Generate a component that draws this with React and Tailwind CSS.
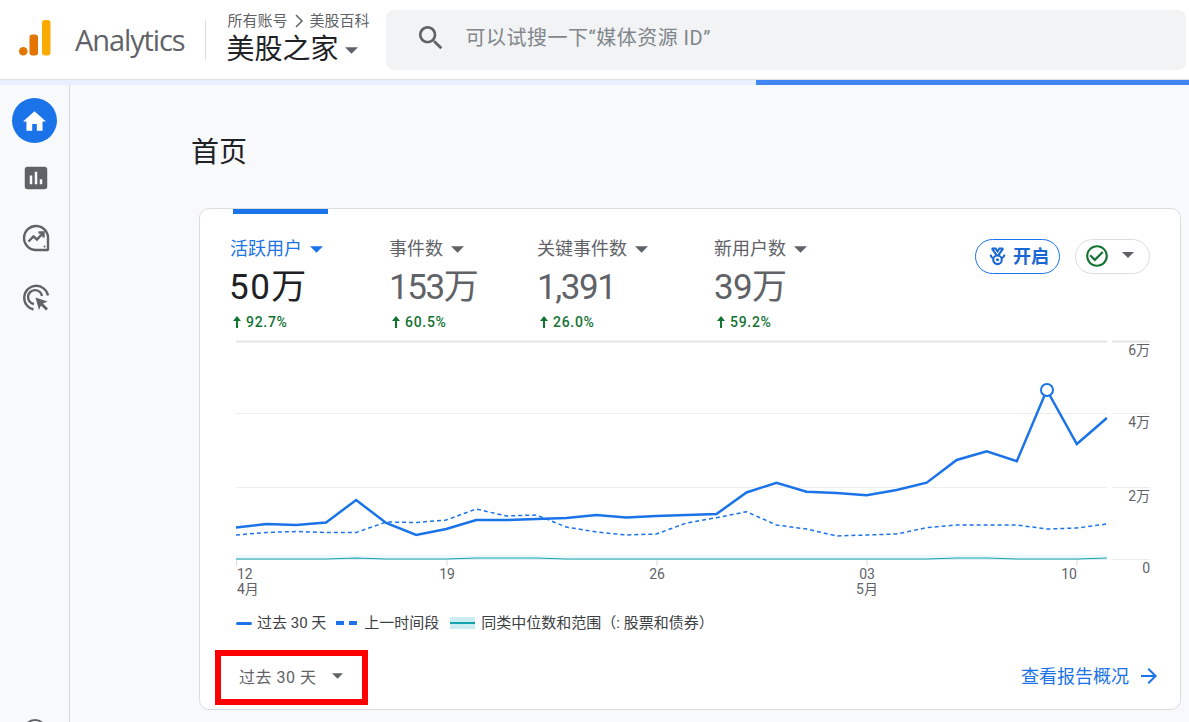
const cjk = "font-['Roboto','Noto_Sans_CJK_SC',sans-serif]";

const current = [527.5, 524, 525, 522.5, 500, 523, 535, 529, 520, 520, 519, 518, 515, 517.5, 516, 515, 514, 492.5, 482.7, 491.7, 493, 495.3, 490, 482.7, 460, 451.3, 461.3, 390, 444, 418];
const previous = [535, 532.5, 531.5, 532.5, 532.5, 522, 522.5, 520, 509, 516, 515, 527, 532, 535, 534, 523, 517.7, 511.7, 525, 529, 536, 535, 534, 527.7, 525, 525, 525, 529, 528, 524];
const median = [559, 559, 559, 559, 558, 559, 559, 559, 558, 558, 558, 559, 559, 559, 559, 559, 559, 559, 559, 559, 559, 559, 559, 559, 558, 558, 559, 559, 559, 558];

const toPoints = (values) => values.map((y, i) => `${236 + i * 30.03},${y}`).join(" ");

function Caret({ className }) {
  return (
    <svg viewBox="0 0 12 6" className={className} fill="currentColor">
      <path d="M0 0h12L6 6z" />
    </svg>
  );
}

function Metric({ label, value, change, active, width, valueClass }) {
  return (
    <div className={width}>
      <div className={`flex items-center gap-[8px] text-[18px] leading-[24px] ${active ? "text-[#1a73e8]" : "text-[#5f6368]"}`}>
        <span>{label}</span>
        <Caret className="w-[13px] h-[7px]" />
      </div>
      <div className={`mt-[7px] text-[35px] leading-[40px] ${valueClass} ${active ? "text-[#202124]" : "text-[#5f6368]"}`}>{value}</div>
      <div className="ml-[1px] mt-[4px] flex items-center gap-[3px] text-[14px] leading-[20px] font-medium text-[#137333] tracking-[0.7px]">
        <svg viewBox="0 0 12 14" className="w-[12px] h-[14px]" fill="currentColor">
          <path d="M6 1 10 6H7v7H5V6H2z" />
        </svg>
        <span>{change}</span>
      </div>
    </div>
  );
}

function Chart() {
  const labelClass = "fill-[#5f6368] text-[14px]";
  return (
    <svg viewBox="230 335 940 265" className="block w-[940px] h-[265px]">
      {[341.5, 413.5, 487.5, 559.5].map((y) => (
        <g key={y} stroke={y === 341.5 ? "#e3e5e8" : "#ebedef"} strokeWidth={y === 341.5 ? 2 : 1}>
          <line x1="236" x2="1107" y1={y} y2={y} />
          <line x1="1112" x2="1150" y1={y} y2={y} />
        </g>
      ))}
      {[236.5, 447, 657, 867, 1077].map((x) => (
        <line key={x} x1={x} x2={x} y1="559" y2="566" stroke="#dadce0" />
      ))}
      <rect x="236" y="555" width="871" height="5" fill="#d5f0f5" opacity="0.4" />
      <polyline points={toPoints(median)} fill="none" stroke="#12a4af" strokeWidth="1.2" />
      <polyline points={toPoints(previous)} fill="none" stroke="#1a73e8" strokeWidth="1.5" strokeDasharray="4 3" />
      <polyline points={toPoints(current)} fill="none" stroke="#1a73e8" strokeWidth="2.5" />
      <circle cx="1047" cy="390" r="6" fill="#fff" stroke="#1a73e8" strokeWidth="2" />
      <text x="237" y="579" className={labelClass}>12</text>
      <text x="237" y="594" className={labelClass}>4月</text>
      <text x="447" y="579" textAnchor="middle" className={labelClass}>19</text>
      <text x="657" y="579" textAnchor="middle" className={labelClass}>26</text>
      <text x="867" y="579" textAnchor="middle" className={labelClass}>03</text>
      <text x="867" y="594" textAnchor="middle" className={labelClass}>5月</text>
      <text x="1069" y="579" textAnchor="middle" className={labelClass}>10</text>
      <text x="1150" y="355" textAnchor="end" className={labelClass}>6万</text>
      <text x="1150" y="427" textAnchor="end" className={labelClass}>4万</text>
      <text x="1150" y="501" textAnchor="end" className={labelClass}>2万</text>
      <text x="1150" y="573" textAnchor="end" className={labelClass}>0</text>
    </svg>
  );
}

function Sidebar() {
  return (
    <aside className="w-[70px] shrink-0 border-r border-[#d5d7da] flex flex-col items-center pt-[13px] relative">
      <div className="w-[45px] h-[45px] ml-[-1px] rounded-full bg-[#1a73e8] flex items-center justify-center">
        <svg viewBox="2 3 20 17" className="w-[23px] h-[20px] ml-[1px]" fill="#fff">
          <path d="M10 20v-6h4v6h5v-8h3L12 3 2 12h3v8z" />
        </svg>
      </div>
      <svg viewBox="0 0 24 24" className="w-[30px] h-[30px] mt-[20px] ml-[2px]" fill="#5f6368">
        <path d="M19 3H5c-1.1 0-2 .9-2 2v14c0 1.1.9 2 2 2h14c1.1 0 2-.9 2-2V5c0-1.1-.9-2-2-2zM9 17H7v-7h2v7zm4 0h-2V7h2v10zm4 0h-2v-4h2v4z" />
      </svg>
      <svg viewBox="0 0 30 30" className="w-[30px] h-[30px] mt-[30px] ml-[2px]" fill="none" stroke="#5f6368" strokeWidth="2.4">
        <path d="M27 16A12 12 0 1 0 15 27h11.5l.5-.5z" />
        <path d="M7.5 18.5l5-5 3.5 3 5.5-6" />
        <path d="M17.5 9.5h5v5" />
        <circle cx="23.5" cy="23.5" r="1" fill="#5f6368" stroke="none" />
      </svg>
      <svg viewBox="0 0 30 30" className="w-[30px] h-[30px] mt-[30px] ml-[2px]" fill="none" stroke="#5f6368" strokeWidth="2.4">
        <path d="M12.5 26.5A12 12 0 1 1 27 12.5" />
        <path d="M13 21a7 7 0 1 1 8-8" />
        <path d="M14.5 14.5l12 4-4.5 2 5 5-2 2-5-5-2 4.5z" fill="#5f6368" stroke="none" />
      </svg>
      <div className="absolute top-[634px] left-[23px] w-[24px] h-[24px] rounded-full border-[2.5px] border-[#5f6368]" />
    </aside>
  );
}

export default function App() {
  return (
    <div className={`w-[1189px] h-[722px] overflow-hidden bg-[#f8f9fb] flex flex-col ${cjk}`}>
      <header className="h-[80px] shrink-0 bg-white border-b border-[#dfe1e5] flex items-center">
        <svg viewBox="0 0 34 38" className="w-[34px] h-[38px] ml-[18px] mt-[-1px]">
          <rect x="1" y="27" width="8.5" height="8.5" rx="4.25" fill="#e37400" />
          <rect x="11.5" y="14.5" width="8.5" height="21" rx="3" fill="#e37400" />
          <rect x="24" y="0" width="8.5" height="35.5" rx="3" fill="#f9ab00" />
        </svg>
        <span className="ml-[23px] text-[29px] leading-none text-[#5f6368] font-['Open_Sans',sans-serif] tracking-[-1.1px]">Analytics</span>
        <div className="ml-[20px] w-px h-[40px] bg-[#dadce0]" />
        <div className="ml-[21px] w-[160px] mt-[-1px]">
          <div className="ml-[1px] flex items-center text-[15px] leading-[20px] text-[#5f6368]">
            <span>所有账号</span>
            <svg viewBox="0 0 10 14" className="w-[10px] h-[14px] mx-[6px]" fill="none" stroke="#5f6368" strokeWidth="1.5">
              <path d="M2 1l6 6-6 6" />
            </svg>
            <span>美股百科</span>
          </div>
          <div className="mt-[2px] flex items-center gap-[6px] text-[28px] leading-[34px] text-[#202124]">
            <span>美股之家</span>
            <Caret className="w-[13px] h-[7px] text-[#5f6368]" />
          </div>
        </div>
        <div className="ml-[-1px] mr-[3px] flex-1 h-[60px] rounded-[8px] bg-[#f1f3f4] flex items-center">
          <svg viewBox="0 0 24 24" className="w-[32px] h-[32px] ml-[29px] mt-[-4px]" fill="#5f6368">
            <path d="M15.5 14h-.79l-.28-.27C15.41 12.59 16 11.11 16 9.5 16 5.91 13.09 3 9.5 3S3 5.91 3 9.5 5.91 16 9.5 16c1.61 0 3.09-.59 4.23-1.57l.27.28v.79l5 4.99L20.49 19l-4.99-5zm-6 0C7.01 14 5 11.99 5 9.5S7.01 5 9.5 5 14 7.01 14 9.5 11.99 14 9.5 14z" />
          </svg>
          <span className="ml-[19px] mt-[-3px] text-[20px] tracking-[0.5px] text-[#80868b]">可以试搜一下“媒体资源 ID”</span>
        </div>
      </header>
      <div className="h-[5px] shrink-0 bg-[#e8f0fe] flex justify-end">
        <div className="w-[433px] bg-[#4285f4]" />
      </div>

      <div className="flex-1 flex min-h-0">
        <Sidebar />
        <main className="flex-1 min-w-0">
          <h1 className="ml-[121px] mt-[48px] text-[28px] leading-[40px] text-[#202124] font-normal">首页</h1>
          <section className="ml-[129px] mt-[35px] w-[982px] h-[502px] bg-white border border-[#dadce0] rounded-[10px] flex flex-col">
            <div className="ml-[33px] w-[95px] h-[5px] bg-[#1a73e8] shrink-0" />
            <div className="flex items-start pl-[30px] pr-[30px] pt-[23px] h-[121px] shrink-0">
              <Metric width="w-[159px]" label="活跃用户" value="50万" change="92.7%" valueClass="ml-[-1px] tracking-[1.5px]" active />
              <Metric width="w-[148px]" label="事件数" value="153万" change="60.5%" valueClass="tracking-[-1.4px]" />
              <Metric width="w-[177px]" label="关键事件数" value="1,391" change="26.0%" valueClass="tracking-[-1.4px]" />
              <Metric width="w-[150px]" label="新用户数" value="39万" change="59.2%" valueClass="tracking-[-0.7px]" />
              <div className="ml-auto flex items-center gap-[15px] mt-[2px]">
                <div className="w-[85px] h-[35px] rounded-full border border-[#1a73e8] flex items-center pl-[12px] gap-[6px] text-[#1967d2] text-[18px] font-bold">
                  <svg viewBox="0 0 20 20" className="w-[19px] h-[19px]" fill="none" stroke="currentColor" strokeWidth="2.2">
                    <path d="M4 1.5l5 7M16 1.5l-5 7M4 1.5h4l2 3 2-3h4" />
                    <circle cx="10" cy="13.5" r="4.5" />
                    <circle cx="10" cy="13.5" r="1.6" fill="currentColor" stroke="none" />
                    <path d="M5.5 11.5A3 3 0 0 1 3 8M14.5 11.5A3 3 0 0 0 17 8" />
                  </svg>
                  <span>开启</span>
                </div>
                <div className="w-[75px] h-[35px] rounded-full border border-[#dadce0] flex items-center pl-[8px]">
                  <svg viewBox="0 0 24 24" className="w-[26px] h-[26px] mt-[-2px]" fill="#137333">
                    <path d="M16.59 7.58L10 14.17l-3.59-3.58L5 12l5 5 8-8zM12 2C6.48 2 2 6.48 2 12s4.48 10 10 10 10-4.48 10-10S17.52 2 12 2zm0 18c-4.42 0-8-3.58-8-8s3.58-8 8-8 8 3.58 8 8-3.58 8-8 8z" />
                  </svg>
                  <Caret className="w-[12px] h-[6px] ml-[12px] mt-[-3px] text-[#5f6368]" />
                </div>
              </div>
            </div>
            <div className="ml-[30px] shrink-0">
              <Chart />
            </div>
            <div className="ml-[36px] mt-[13px] flex items-center text-[15px] leading-[20px] text-[#3c4043] shrink-0">
              <div className="w-[16px] h-[3px] rounded-full bg-[#1a73e8]" />
              <span className="ml-[5px]">过去 30 天</span>
              <div className="ml-[10px] flex gap-[5px]">
                <div className="w-[8px] h-[4px] bg-[#1a73e8]" />
                <div className="w-[8px] h-[4px] bg-[#1a73e8]" />
              </div>
              <span className="ml-[7px]">上一时间段</span>
              <div className="ml-[11px] w-[25px] h-[12px] bg-[#ccedf2] flex items-center">
                <div className="w-full h-[2px] bg-[#12a4af]" />
              </div>
              <span className="ml-[6px]">同类中位数和范围（: 股票和债券）</span>
            </div>
            <div className="mt-[auto] mb-[4px] flex items-center justify-between pl-[15px] pr-[19px]">
              <div className="w-[153px] h-[55px] border-[6px] border-[#ff0000] flex items-center pl-[18px] text-[16px] text-[#5f6368] tracking-[0.5px]">
                <span>过去 30 天</span>
                <Caret className="w-[11px] h-[6px] ml-[16px] mt-[-4px]" />
              </div>
              <div className="flex items-center gap-[8px] text-[18px] text-[#1a73e8] mt-[-3px]">
                <span>查看报告概况</span>
                <svg viewBox="0 0 24 24" className="w-[24px] h-[24px]" fill="currentColor">
                  <path d="M12 4l-1.41 1.41L16.17 11H4v2h12.17l-5.58 5.59L12 20l8-8z" />
                </svg>
              </div>
            </div>
          </section>
        </main>
      </div>
    </div>
  );
}
